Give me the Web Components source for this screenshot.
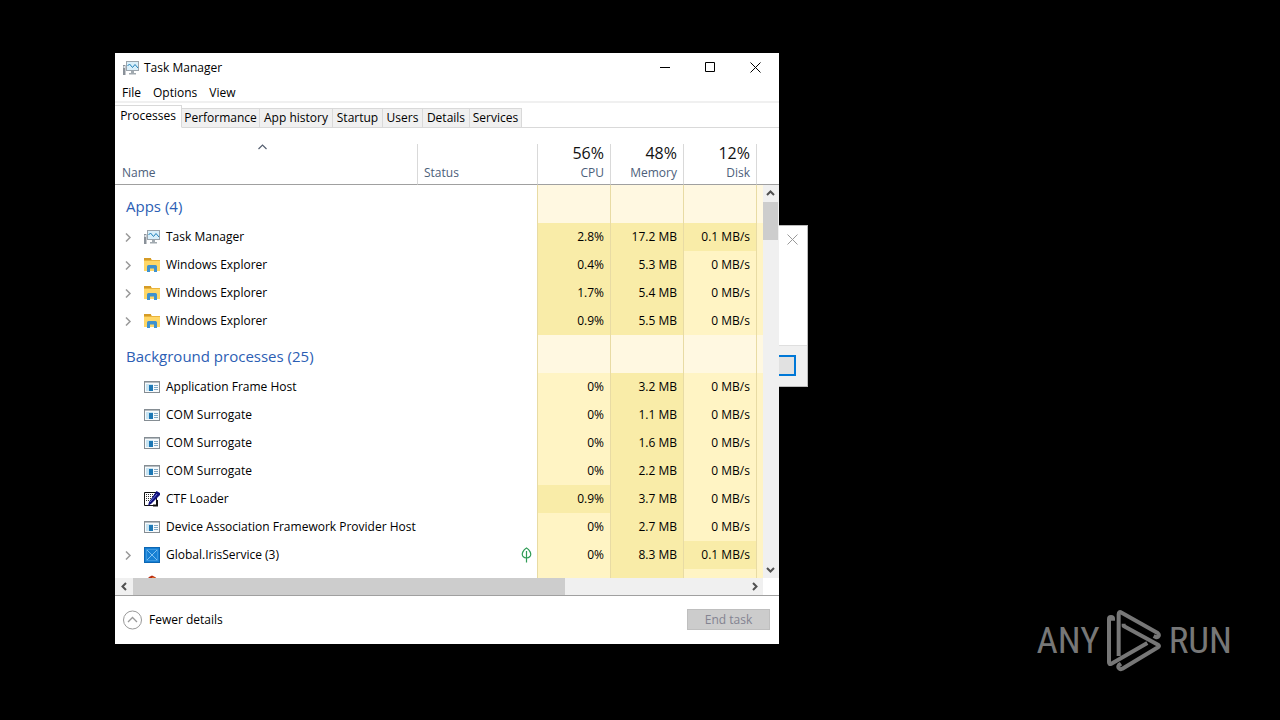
<!DOCTYPE html>
<html lang="en">
<head>
<meta charset="utf-8">
<title>Task Manager</title>
<style>
  html, body { margin: 0; background: #000; }
  body { font: 12px/16px "Open Sans", "Noto Sans", sans-serif; color: #000; }
</style>
</head>
<body>
<desk-top>
  <confirm-dialog></confirm-dialog>
  <tm-window heading="Task Manager">
    <tm-menu slot="bar"></tm-menu>
    <tm-tabs slot="bar"></tm-tabs>
    <tm-processes></tm-processes>
    <tm-footer slot="foot"></tm-footer>
  </tm-window>
  <any-run></any-run>
</desk-top>

<script>
const BASE = `*{box-sizing:border-box} button{font:inherit;color:inherit;background:none;border:0;padding:0;margin:0;display:block}svg{display:block}`;
function define(name, css, html) {
  customElements.define(name, class extends HTMLElement {
    constructor() {
      super();
      const body = typeof html === 'function' ? html(this) : html;
      this.attachShadow({ mode: 'open' }).innerHTML = `<style>${BASE}${css}</style>${body}`;
    }
  });
}

const ICONS = {
  monitor: `<path d="M0 5h2.500v10H0z" fill="#8a9199"/><path d="M.5 6h1.500v2H.5z" fill="#dfe5ea"/><rect x="3.500" y="1.500" width="12" height="9" fill="#d9effa" stroke="#9aa4ac"/><path d="M4.500 6l2-2 3 3.500 2.500-3L15 8" fill="none" stroke="#2082ba"/><path d="M8 11h3v2h2v1.500H6V13h2z" fill="#a2aab0"/>`,
  folder: `<path d="M0 1h6.500l1.500 2h8v11H0z" fill="#eab43c"/><path d="M0 4h16v10H0z" fill="#ffd767"/><path d="M0 1h7v2H0z" fill="#d59b26"/><path d="M3 15V9.500Q3 8 4.500 8h7Q13 8 13 9.500V15h-3v-3.500H6V15z" fill="#3f92cf"/>`,
  app: `<rect x=".5" y="2.500" width="15" height="11" fill="#f7fafc" stroke="#858d93"/><path d="M1 3h14v1H1z" fill="#b5bcc1"/><path d="M2 5h7v7H2z" fill="#c8e4f2"/><path d="M5 6h4v6H5z" fill="#1d78b5"/><path d="M10 6.500h4M10 8.500h4M10 10.500h4" stroke="#82a9c4"/>`,
  ctf: `<path d="M.5 1.500h12v13H.5z" fill="#fff" stroke="#111"/><path d="M2 3.500h9M2 5.500h9M2 7.500h9M2 9.500h7" stroke="#333" stroke-dasharray="1 1"/><path d="M12.500 0L16 2v2L7.500 12.500 4 15l1-4z" fill="#10107c"/><path d="M6 11l7-8" stroke="#6b78d6"/><path d="M9 14.500h4V9" fill="none" stroke="#111" stroke-width="2"/>`,
  iris: `<rect x=".5" y=".5" width="15" height="15" fill="#1680d4" stroke="#0c66b3"/><path d="M2.500 2.500h11v11h-11z" fill="none" stroke="#3b96de"/><path d="M3 3l10 10M13 3L3 13" stroke="#7cc0f2"/>`,
  red: `<path d="M3 4.500l2-2.500 3-1.500L11 2l3 2.500z" fill="#b92b10"/><path d="M8 2l4 1 1 1.500H9z" fill="#ea7a21"/>`
};
define('tm-icon', `:host{display:block;width:16px;height:16px;flex:none}`,
  el => `<svg width="16" height="16" viewBox="0 0 16 16" aria-hidden="true">${ICONS[el.getAttribute('kind')]}</svg>`);

define('desk-top', `:host{display:flex;position:relative;min-height:100vh;box-sizing:border-box;padding:53px 501px 76px 115px}`, `<slot></slot>`);

define('tm-window', `
  :host{display:flex;flex-direction:column;flex:1;min-width:0;background:#fff;position:relative}
  header{display:flex;align-items:center;height:30px;padding:0 1px 0 8px}
  h1{font:inherit;margin:0 auto 0 5px}
  button{width:45px;height:28px;display:grid;place-items:center;align-self:start}
  main{flex:1;min-height:0;display:flex}
`, el => `<header><tm-icon kind="monitor"></tm-icon><h1>${el.getAttribute('heading')}</h1>
  <button aria-label="Minimize"><svg width="11" height="11"><path d="M0 5.500h10" stroke="#000"/></svg></button>
  <button aria-label="Maximize"><svg width="11" height="11"><path d="M.5.5h9v9h-9z" fill="none" stroke="#000"/></svg></button>
  <button aria-label="Close"><svg width="11" height="11"><path d="M.5.5l10 10M10.500.5l-10 10" stroke="#000"/></svg></button></header>
  <slot name="bar"></slot><main><slot></slot></main><slot name="foot"></slot>`);

define('tm-menu', `:host{display:block;padding:2px 7px 0;height:20px;border-bottom:2px solid #f0f0f0;box-sizing:border-box}
  nav{display:flex;gap:12px}`,
  `<nav><button>File</button><button>Options</button><button>View</button></nav>`);

define('tm-tabs', `
  :host{display:block;border-bottom:1px solid #d9d9d9;height:25px;box-sizing:border-box}
  div{display:grid;grid-template-columns:67px 78px 73px 50px 40px 47px 52px;align-items:end;height:25px}
  button{height:20px;background:#f0f0f0;border:1px solid #d9d9d9;border-left:0;text-align:center;white-space:nowrap}
  button[aria-selected=true]{height:23px;background:#fff;border-bottom-color:#fff;padding-bottom:2px}
`, `<div role="tablist">${['Processes','Performance','App history','Startup','Users','Details','Services'].map((t,i)=>`<button role="tab" aria-selected="${i===0}">${t}</button>`).join('')}</div>`);

const ARROWS = { up:'M1 6l3.500-3.500L8 6', down:'M1 3l3.500 3.500L8 3', left:'M6 1L2.500 4.500 6 8', right:'M3 1l3.500 3.500L3 8' };
const arrow = d => `<button aria-label="Scroll ${d}"><svg width="9" height="9"><path d="${ARROWS[d]}" fill="none" stroke="#505050" stroke-width="2"/></svg></button>`;
define('tm-scrollbar', `
  :host{display:flex;background:#f0f0f0}
  :host([vertical]){flex-direction:column;width:16px}
  :host(:not([vertical])){height:17px;margin-right:16px}
  button{width:18px;height:17px;flex:none;display:grid;place-items:center}
  :host([vertical]) button{width:15px}
  i{background:#cdcdcd}
  :host([vertical]) i{height:38px;margin:0 1px auto 0}
  :host(:not([vertical])) i{flex:12}
  :host(:not([vertical])) b{flex:5}
`, el => el.hasAttribute('vertical') ? arrow('up')+'<i></i>'+arrow('down') : arrow('left')+'<i></i><b></b>'+arrow('right'));

const ROWS = [
  { group: 'Apps (4)' },
  ['monitor','Task Manager','2.8%','17.2 MB','0.1 MB/s',1],
  ['folder','Windows Explorer','0.4%','5.3 MB','0 MB/s',1],
  ['folder','Windows Explorer','1.7%','5.4 MB','0 MB/s',1],
  ['folder','Windows Explorer','0.9%','5.5 MB','0 MB/s',1],
  { group: 'Background processes (25)' },
  ['app','Application Frame Host','0%','3.2 MB','0 MB/s'],
  ['app','COM Surrogate','0%','1.1 MB','0 MB/s'],
  ['app','COM Surrogate','0%','1.6 MB','0 MB/s'],
  ['app','COM Surrogate','0%','2.2 MB','0 MB/s'],
  ['ctf','CTF Loader','0.9%','3.7 MB','0 MB/s'],
  ['app','Device Association Framework Provider Host','0%','2.7 MB','0 MB/s'],
  ['iris','Global.IrisService (3)','0%','8.3 MB','0.1 MB/s',1,1],
  ['red','','','','']
];
const cell = (v, hot) => `<td class="m${hot ? ' hot' : ''}">${v}</td>`;
const LEAF = `<svg class="leaf" width="11" height="16" role="img" aria-label="Efficiency mode"><path d="M5.500 1C2.500 2.500 0 7 2 9.500q1.500 1.500 3.500 1.500T9 9.500C11 7 8.500 2.500 5.500 1zM5.500 4v11.500" fill="none" stroke="#2f9b55" stroke-width="1.200"/></svg>`;
const row = r => r.group
  ? `<tr class="g"><th colspan="2" scope="rowgroup">${r.group}</th><td class="m"></td><td class="m"></td><td class="m"></td><td class="m"></td></tr>`
  : `<tr><td><div class="n"><span class="x">${r[5] ? '<button aria-label="Expand"><svg width="7" height="9"><path d="M1 .5l4 4-4 4" fill="none" stroke="#999" stroke-width="1.500"/></svg></button>' : ''}</span><tm-icon kind="${r[0]}"></tm-icon><span>${r[1]}</span></div></td><td>${r[6] ? LEAF : ''}</td>${cell(r[2], parseFloat(r[2]) > 0)}${cell(r[3], true)}${cell(r[4], parseFloat(r[4]) > 0)}<td class="m"></td></tr>`;

define('tm-processes', `
  :host{display:flex;flex-direction:column;flex:1;min-width:0;padding-top:14px}
  .view{flex:1 1 0;min-height:0;overflow:hidden;padding-top:2px;display:grid;grid-template:41px minmax(0,1fr)/minmax(0,1fr) 16px}
  table{grid-area:1/1/3/3;align-self:start;width:100%;table-layout:fixed;border-collapse:separate;border-spacing:0}
  tm-scrollbar[vertical]{grid-area:2/2;position:relative}
  .s{width:120px}.v{width:73px}.e{width:22px}
  thead th{height:41px;padding:0 6px 3px 7px;font-weight:400;vertical-align:bottom;text-align:left;color:#4c607a;border-bottom:1px solid #a0a0a0;border-right:1px solid #d9d9d9}
  thead th:nth-child(2){padding-left:6px}
  thead th:last-child{border-right:0}
  thead th.r{text-align:right;padding:0 6px 3px 0}
  thead strong{display:block;font-weight:400;font-size:16px;line-height:18px;margin-bottom:3px;color:#111}
  .sort{display:block;margin:0 auto 15px;position:relative;left:-4px}
  td,tbody th{height:28px;padding:0}
  .n{display:flex;align-items:center;padding-left:10px;white-space:nowrap}
  .n tm-icon{margin-right:6px}
  .x{width:19px}
  .m{background:#fff4c4;text-align:right;padding-right:6px;border-right:1px solid #e8dba4}
  .m:last-child{border-right:0}
  td:nth-child(2):not(.m){border-right:1px solid #e8dba4}
  .hot{background:#f9eca8}
  .g th{height:38px;text-align:left;font-weight:400;font-size:15px;line-height:22px;color:#2c5eb4;padding:4px 0 0 11px;border-right:1px solid #e8dba4}
  .g .m{background:#fff8e1}
  .leaf{margin-left:auto;margin-right:5px}
`, `<div class="view"><table>
  <colgroup><col><col class="s"><col class="v"><col class="v"><col class="v"><col class="e"></colgroup>
  <thead><tr><th><svg class="sort" width="9" height="6" aria-hidden="true"><path d="M.5 5l4-4 4 4" fill="none" stroke="#555f70" stroke-width="1.200"/></svg>Name</th><th>Status</th>
  <th class="r"><strong>56%</strong>CPU</th><th class="r"><strong>48%</strong>Memory</th><th class="r"><strong>12%</strong>Disk</th><th></th></tr></thead>
  <tbody>${ROWS.map(row).join('')}</tbody></table><tm-scrollbar vertical></tm-scrollbar></div><tm-scrollbar></tm-scrollbar>`);

define('tm-footer', `
  :host{display:flex;align-items:center;justify-content:space-between;height:49px;border-top:1px solid #a0a0a0;box-sizing:border-box;padding:0 9px 1px 8px}
  .f{display:flex;align-items:center;gap:6px}
  .e{width:83px;height:21px;background:#ccc;border:1px solid #bfbfbf;color:#838391;text-align:center}
`, `<button class="f"><svg width="20" height="20" aria-hidden="true"><circle cx="9.500" cy="10" r="9" fill="none" stroke="#999"/><path d="M5 12l4.500-4.500L14 12" fill="none" stroke="#999" stroke-width="1.300"/></svg>Fewer details</button><button class="e" disabled>End task</button>`);

define('confirm-dialog', `
  :host{position:absolute;right:472px;top:225px;width:180px;height:162px;background:#fff;display:flex;flex-direction:column;border:1px solid #bbb;border-left:0;box-sizing:border-box}
  .c{margin:8px 9px auto auto}
  footer{height:41px;background:#f0f0f0;border-top:1px solid #dfdfdf;padding:9px 11px;display:flex;justify-content:end}
  .ok{width:75px;height:21px;background:#e1e1e1;border:2px solid #0078d7}
`, `<button class="c" aria-label="Close"><svg width="11" height="11"><path d="M.5.5l10 10M10.500.5l-10 10" stroke="#999"/></svg></button><footer><button class="ok" aria-label="OK"></button></footer>`);

define('any-run', `
  :host{position:absolute;right:48px;bottom:48px;display:flex;align-items:center;gap:7px;color:#777;font:37px/62px "Roboto Condensed","Liberation Sans Narrow","Liberation Sans",sans-serif}
`, `<span>ANY</span><svg width="55" height="62" viewBox="30 14 165 186" role="img" aria-label="Play"><g fill="none" stroke="#777" stroke-width="12" stroke-linejoin="round" stroke-linecap="butt"><path d="M48 46V40q0-5-6-5t-6 6V171q0 8 7 4L151 113"/><path d="M65 152V27q0-10 9-5L182 83q5 4 3 9t-9 3l-6-3"/><path d="M80 55V62L183 118q6 4 0 8L76 190q-6 4-10-1t0-10l6-4"/></g></svg><span>RUN</span>`);
</script>
</body>
</html>
